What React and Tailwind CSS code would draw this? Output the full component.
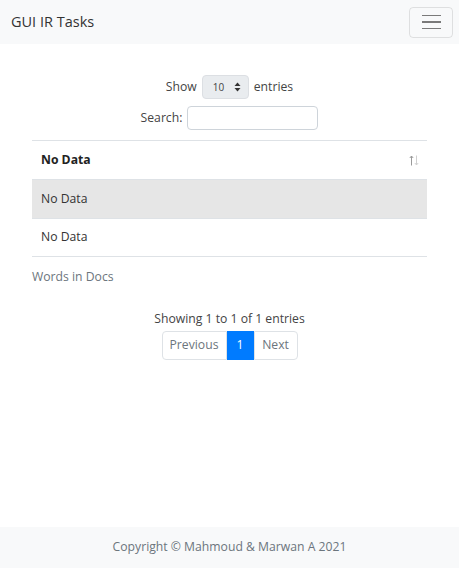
import React from 'react';

const App = () => {
  return (
    <div className="min-h-screen flex flex-col bg-white text-[#212529]" style={{ fontFamily: '"Open Sans", "Noto Sans", sans-serif' }}>
      <nav className="h-[44px] bg-[#f8f9fa] flex items-center justify-between pl-[11px] pr-[6px]">
        <span className="text-[14.5px] text-[#333]">GUI IR Tasks</span>
        <button className="w-[44px] h-[31px] border border-[rgba(0,0,0,0.1)] rounded flex flex-col items-center justify-center gap-[5px]">
          <span className="block w-[19px] h-[1.5px] bg-[#7a7a7a]"></span>
          <span className="block w-[19px] h-[1.5px] bg-[#7a7a7a]"></span>
          <span className="block w-[19px] h-[1.5px] bg-[#7a7a7a]"></span>
        </button>
      </nav>

      <main className="flex-1 px-[32px] pt-[31px]">
        <div className="flex items-center justify-center gap-[5px] text-[12.2px] text-[#444]">
          <span>Show</span>
          <div className="w-[47px] h-[24px] bg-[#e9ecef] border border-[#dcdfe3] rounded flex items-center justify-between pl-[10px] pr-[7px]">
            <span className="text-[10px]">10</span>
            <svg width="7" height="10" viewBox="0 0 7 10">
              <path d="M3.5 0.5 L6.5 4 L0.5 4 Z" fill="#333" />
              <path d="M3.5 9.5 L6.5 6 L0.5 6 Z" fill="#333" />
            </svg>
          </div>
          <span>entries</span>
        </div>
        <div className="flex items-center justify-center gap-[5px] mt-[7px] text-[12.2px] text-[#444]">
          <span>Search:</span>
          <div className="w-[131px] h-[24px] border border-[#ced4da] rounded bg-white"></div>
        </div>

        <table className="w-full mt-[10px] text-[12.2px] border-t border-[#dee2e6]">
          <thead>
            <tr className="h-[39px] border-b border-[#dee2e6]">
              <th className="text-left font-bold pl-[9px] text-[#222]">No Data</th>
              <th className="w-[30px] pr-[8px]">
                <svg width="10" height="11" viewBox="0 0 10 11" className="ml-auto block">
                  <path d="M2.5 10.5 V1 M0.8 3 L2.5 1 L4.2 3" stroke="#9a9a9a" strokeWidth="1" fill="none" />
                  <path d="M7.5 0.5 V10 M5.8 8 L7.5 10 L9.2 8" stroke="#d0d0d0" strokeWidth="1" fill="none" />
                </svg>
              </th>
            </tr>
          </thead>
          <tbody>
            <tr className="h-[39px] bg-[#e6e6e6] border-b border-[#dee2e6]">
              <td colSpan={2} className="pl-[9px] text-[#333]">No Data</td>
            </tr>
            <tr className="h-[38px] border-b border-[#dee2e6]">
              <td colSpan={2} className="pl-[9px] text-[#333]">No Data</td>
            </tr>
          </tbody>
        </table>

        <div className="mt-[11px] text-[12.2px] text-[#6c757d]">Words in Docs</div>

        <div className="mt-[24px] text-center text-[12.2px] text-[#444]">Showing 1 to 1 of 1 entries</div>
        <div className="flex justify-center mt-[2px]">
          <div className="flex h-[29px] text-[12.2px]">
            <span className="w-[65px] flex items-center justify-center border border-[#dee2e6] rounded-l text-[#6c757d]">Previous</span>
            <span className="w-[27px] flex items-center justify-center bg-[#007bff] text-white">1</span>
            <span className="w-[44px] flex items-center justify-center border border-[#dee2e6] rounded-r text-[#6c757d]">Next</span>
          </div>
        </div>
      </main>

      <footer className="h-[41px] bg-[#f8f9fa] flex items-center justify-center text-[12.2px] text-[#6c757d]">
        Copyright © Mahmoud &amp; Marwan A 2021
      </footer>
    </div>
  );
};

export default App;
